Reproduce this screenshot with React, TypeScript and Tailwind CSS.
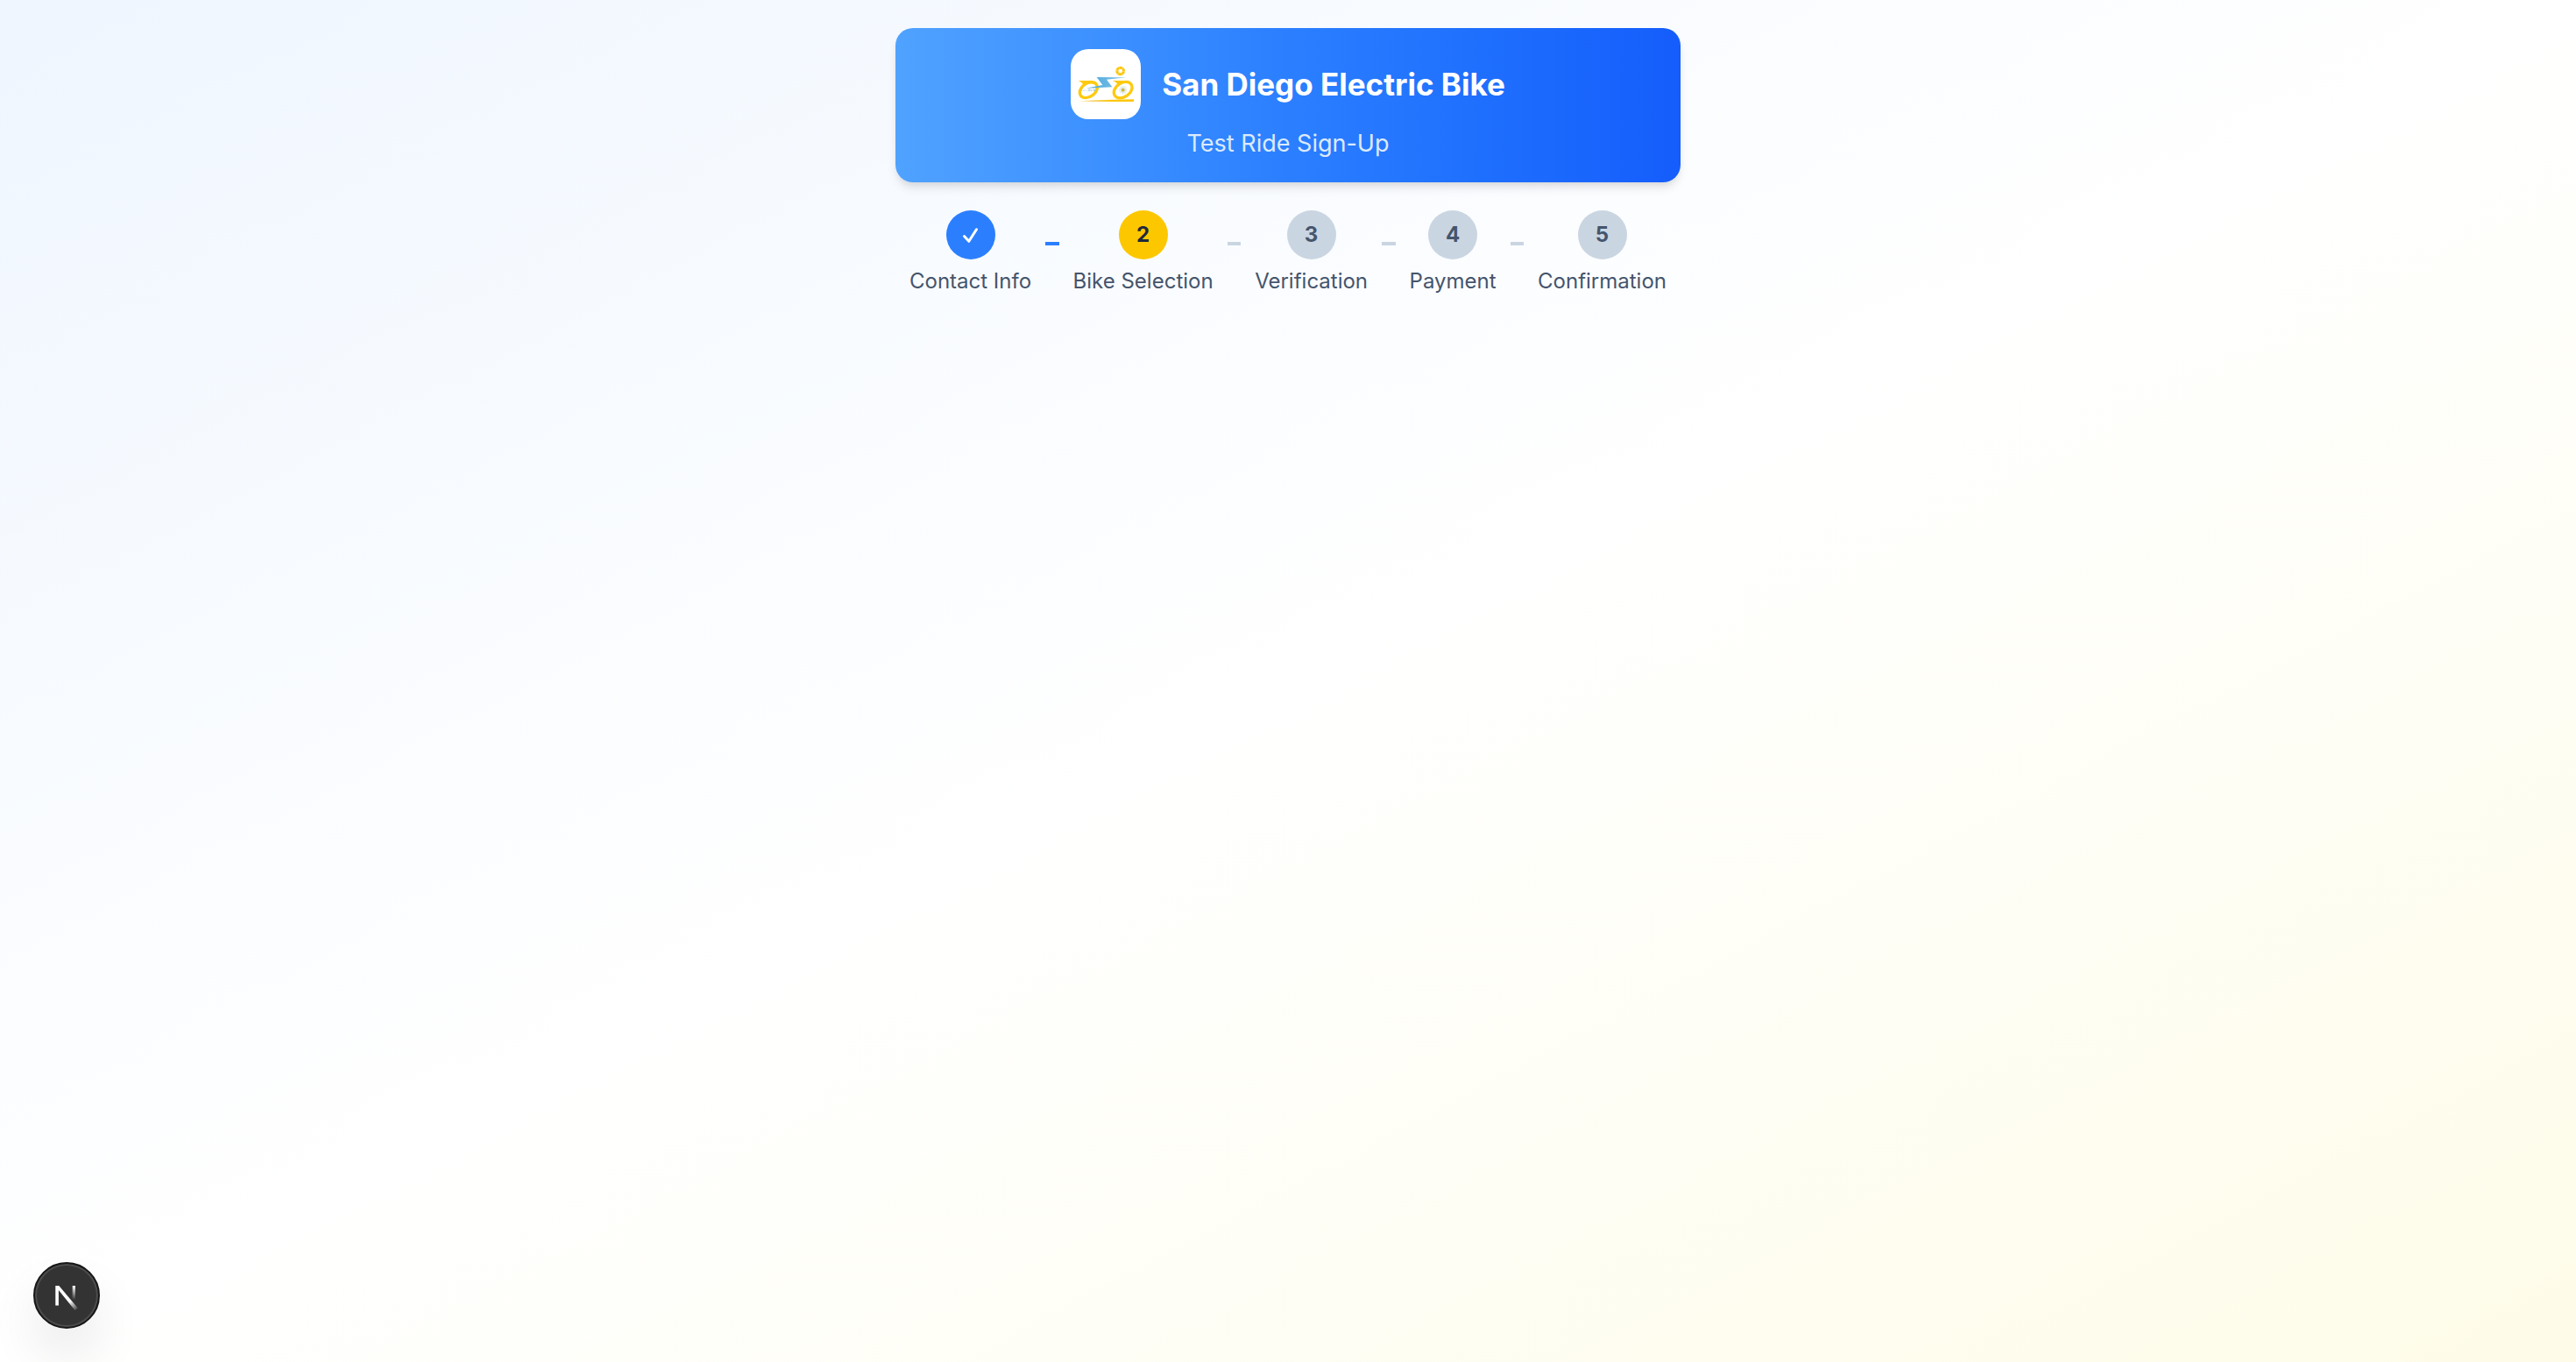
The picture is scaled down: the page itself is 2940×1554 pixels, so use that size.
import React from "react";

type StepState = "done" | "current" | "upcoming";

const steps: { label: string; state: StepState }[] = [
  { label: "Contact Info", state: "done" },
  { label: "Bike Selection", state: "current" },
  { label: "Verification", state: "upcoming" },
  { label: "Payment", state: "upcoming" },
  { label: "Confirmation", state: "upcoming" },
];

const circleStyles: Record<StepState, string> = {
  done: "bg-[#2b7fff] text-white",
  current: "bg-[#fdc700] text-[#1d293d]",
  upcoming: "bg-[#cad5e2] text-[#45556c]",
};

function BikeLogo() {
  return (
    <svg viewBox="0 0 240 240" className="size-full" role="img" aria-label="San Diego Electric Bike logo">
      <defs>
        <linearGradient id="ground" x1="0" x2="1" y1="0" y2="0">
          <stop offset="0" stopColor="#fdc70c" stopOpacity="0" />
          <stop offset="0.25" stopColor="#f5c84a" stopOpacity="0.75" />
          <stop offset="0.6" stopColor="#fdc70c" />
          <stop offset="1" stopColor="#fdc70c" />
        </linearGradient>
        <linearGradient id="bolt" x1="0" x2="1" y1="0" y2="0">
          <stop offset="0" stopColor="#4aa9d8" />
          <stop offset="0.6" stopColor="#6cb8e4" />
          <stop offset="1" stopColor="#8fc9ea" />
        </linearGradient>
      </defs>
      <path d="M22 178 C80 173 150 173 216 172 V180 C150 180 80 180 22 179 Z" fill="url(#ground)" />
      <g fill="none" stroke="#fdca10" strokeWidth="10">
        <ellipse cx="61" cy="140" rx="33" ry="23" transform="rotate(-35 61 140)" />
        <ellipse cx="179" cy="140" rx="34" ry="24" transform="rotate(-35 179 140)" />
      </g>
      <g fill="#fdca10">
        <path d="M26 108 H76 L62 117 L44 124 C40 116 34 111 26 108 Z" />
        <path d="M143 108 H194 L180 117 L162 124 C158 116 152 111 143 108 Z" />
      </g>
      <circle cx="170" cy="75" r="11.5" fill="none" stroke="#fdc70c" strokeWidth="9" />
      <circle cx="170" cy="75" r="11.5" fill="none" stroke="#ffeaa0" strokeWidth="8" strokeDasharray="1.5 10.5" />
      <path d="M89 96 L191 97 L123 104 L142 130 L53 134 L109 123 Z" fill="url(#bolt)" />
      <g strokeWidth="1.6" strokeLinecap="round" opacity="0.8">
        <path d="M179 128 V152 M167 140 H191 M170 131 L188 149 M188 131 L170 149" stroke="#8fb9bd" />
        <path d="M174 128 L184 152 M184 128 L174 152 M167 135 L191 145 M167 145 L191 135" stroke="#d8d9a0" />
      </g>
      <circle cx="179" cy="140" r="5.5" fill="#cdb640" />
      <path d="M38 138 V143 M42 143 H46 M49 139 V143 M55 143 H57 M61 138 H66 V143 H61 Z M70 138 V143 H74 M78 138 H83 V143 H78 Z" fill="none" stroke="#8fc5de" strokeWidth="2" />
    </svg>
  );
}

function CheckIcon() {
  return (
    <svg viewBox="0 0 20 20" className="size-5" fill="none" aria-hidden="true">
      <path
        d="M2.5 11.5 L7.8 17.3 L16.5 3.8"
        stroke="currentColor"
        strokeWidth="3"
        strokeLinecap="round"
        strokeLinejoin="round"
      />
    </svg>
  );
}

function Header() {
  return (
    <header className="rounded-[20px] bg-linear-to-r from-[#50a2ff] via-[#2b7fff] to-[#155dfc] p-6 text-center shadow-[0_8px_12px_-2px_rgba(0,0,0,0.1),0_4px_8px_-4px_rgba(0,0,0,0.1)]">
      <div className="flex items-center justify-center gap-6">
        <div className="size-20 overflow-hidden rounded-[20px] bg-white">
          <BikeLogo />
        </div>
        <h1 className="text-[35px] leading-[48px] font-bold whitespace-nowrap text-white">San Diego Electric Bike</h1>
      </div>
      <p className="mt-2 text-[27px] leading-[40px] text-[#dbeafe]">Test Ride Sign-Up</p>
    </header>
  );
}

function Stepper() {
  return (
    <ol className="mt-8 flex items-start gap-4 px-4">
      {steps.map((step, index) => (
        <React.Fragment key={step.label}>
          {index > 0 && (
            <li
              aria-hidden="true"
              className={`mt-9 h-1 min-w-2 flex-1 ${steps[index - 1].state === "done" ? "bg-[#2b7fff]" : "bg-[#cad5e2]"}`}
            />
          )}
          <li
            className="flex flex-col items-center gap-2"
            aria-current={step.state === "current" ? "step" : undefined}
          >
            <span
              className={`flex size-14 items-center justify-center rounded-full text-[24px] leading-8 font-bold ${circleStyles[step.state]}`}
            >
              {step.state === "done" ? <CheckIcon /> : index + 1}
            </span>
            <span className="text-[24px] leading-[34px] whitespace-nowrap text-[#45556c]">{step.label}</span>
          </li>
        </React.Fragment>
      ))}
    </ol>
  );
}

function DevToolsButton() {
  return (
    <button
      type="button"
      aria-label="Open Next.js Dev Tools"
      className="fixed bottom-[38px] left-[38px] flex size-[76px] items-center justify-center rounded-full border-2 border-[#171717] bg-[#333333] shadow-[inset_0_0_0_2px_#4d4d4d,0_32px_64px_-16px_rgba(0,0,0,0.24)]"
    >
      <svg viewBox="0 0 72 72" className="size-full" fill="none" aria-hidden="true">
        <defs>
          <linearGradient id="diagonal" x1="36" y1="36" x2="49" y2="53" gradientUnits="userSpaceOnUse">
            <stop offset="0.35" stopColor="#fff" />
            <stop offset="1" stopColor="#fff" stopOpacity="0" />
          </linearGradient>
          <linearGradient id="stem" x1="0" y1="25" x2="0" y2="41" gradientUnits="userSpaceOnUse">
            <stop stopColor="#fff" />
            <stop offset="1" stopColor="#fff" stopOpacity="0" />
          </linearGradient>
        </defs>
        <rect x="42.7" y="25" width="3.3" height="17" fill="url(#stem)" />
        <path d="M23.3 25 H27.3 L48.8 50.5 L45.5 53 L26.9 30 V47.5 H23.3 Z" fill="url(#diagonal)" />
      </svg>
    </button>
  );
}

export default function App() {
  return (
    <div className="min-h-screen bg-linear-to-br from-[#eff6ff] via-white to-[#fefce8] font-['Inter',sans-serif] antialiased">
      <main className="mx-auto max-w-[960px] p-8">
        <Header />
        <Stepper />
      </main>
      <DevToolsButton />
    </div>
  );
}
